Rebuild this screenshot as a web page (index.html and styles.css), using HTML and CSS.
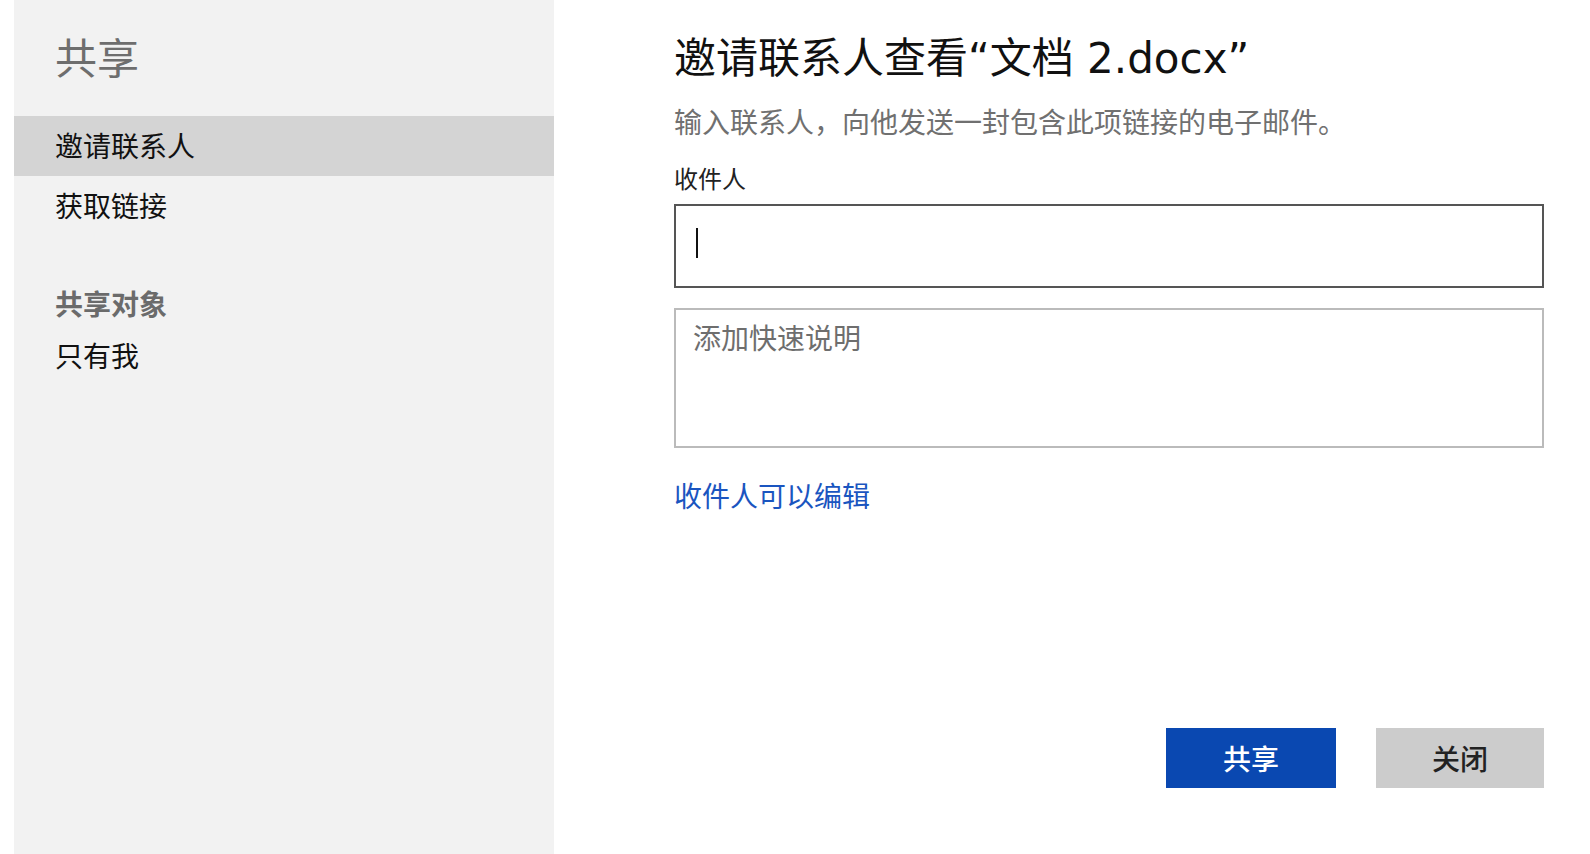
FILE: index.html
```html
<!DOCTYPE html>
<html lang="zh-CN">
<head>
<meta charset="utf-8">
<title>共享</title>
<link rel="stylesheet" href="styles.css">
</head>
<body>
<div class="page">
  <aside class="sidebar">
    <h1 class="side-title">共享</h1>
    <ul class="nav">
      <li class="nav-item active">邀请联系人</li>
      <li class="nav-item">获取链接</li>
    </ul>
    <div class="section-head">共享对象</div>
    <div class="section-item">只有我</div>
  </aside>
  <main class="main">
    <h2 class="title">邀请联系人查看“文档 2.docx”</h2>
    <p class="subtitle">输入联系人，向他发送一封包含此项链接的电子邮件。</p>
    <div class="label">收件人</div>
    <div class="field"><span class="caret"></span></div>
    <div class="note"><span class="placeholder">添加快速说明</span></div>
    <a class="link">收件人可以编辑</a>
    <div class="actions">
      <button class="btn btn-primary">共享</button>
      <button class="btn btn-secondary">关闭</button>
    </div>
  </main>
</div>
</body>
</html>
```

FILE: styles.css
```css
* { box-sizing: border-box; }
html, body {
  margin: 0;
  padding: 0;
  background: #ffffff;
}
body {
  font-family: "Noto Sans", "Noto Sans CJK SC", sans-serif;
  color: #111;
}
.page {
  display: flex;
  width: 1590px;
  height: 854px;
}
.sidebar {
  margin-left: 14px;
  width: 540px;
  height: 854px;
  background: #f2f2f2;
  padding-top: 28px;
  display: flex;
  flex-direction: column;
}
.side-title {
  margin: 0;
  padding-left: 41px;
  font-size: 42px;
  line-height: 60px;
  font-weight: 400;
  color: #6e6e6e;
}
.nav {
  list-style: none;
  margin: 28px 0 0;
  padding: 0;
}
.nav-item {
  height: 60px;
  line-height: 60px;
  padding-left: 41px;
  font-size: 28px;
  color: #111;
}
.nav-item.active {
  background: #d4d4d4;
}
.section-head {
  margin-top: 48px;
  padding-left: 41px;
  font-size: 28px;
  line-height: 40px;
  font-weight: 600;
  color: #6b6b6b;
}
.section-item {
  margin-top: 12px;
  padding-left: 41px;
  font-size: 28px;
  line-height: 40px;
  color: #111;
}
.main {
  flex: 1;
  display: flex;
  flex-direction: column;
  padding: 31px 46px 66px 120px;
}
.title {
  margin: 0;
  font-family: "DejaVu Sans", "Noto Sans CJK SC", sans-serif;
  font-size: 42px;
  line-height: 56px;
  font-weight: 400;
  color: #111;
  white-space: nowrap;
}
.subtitle {
  margin: 15px 0 0;
  font-size: 28px;
  line-height: 40px;
  color: #707070;
}
.label {
  margin-top: 21px;
  font-size: 24px;
  line-height: 32px;
  color: #222;
}
.field {
  margin-top: 9px;
  height: 84px;
  border: 2px solid #555;
  background: #fff;
  padding: 22px 0 0 20px;
}
.caret {
  display: block;
  width: 2px;
  height: 30px;
  background: #111;
}
.note {
  margin-top: 20px;
  height: 140px;
  border: 2px solid #bbbbbb;
  background: #fff;
  padding: 8px 0 0 17px;
}
.placeholder {
  font-size: 28px;
  line-height: 40px;
  color: #6e6e6e;
}
.link {
  margin-top: 28px;
  font-size: 28px;
  line-height: 40px;
  color: #1a55c0;
  align-self: flex-start;
  cursor: pointer;
}
.actions {
  margin-top: auto;
  display: flex;
  justify-content: flex-end;
  gap: 40px;
}
.btn {
  height: 60px;
  border: none;
  font-family: "Noto Sans", "Noto Sans CJK SC", sans-serif;
  font-size: 28px;
  font-weight: 500;
  padding: 0;
}
.btn-primary {
  width: 170px;
  background: #0a48b1;
  color: #fff;
}
.btn-secondary {
  width: 168px;
  background: #cccccc;
  color: #222;
}
```
